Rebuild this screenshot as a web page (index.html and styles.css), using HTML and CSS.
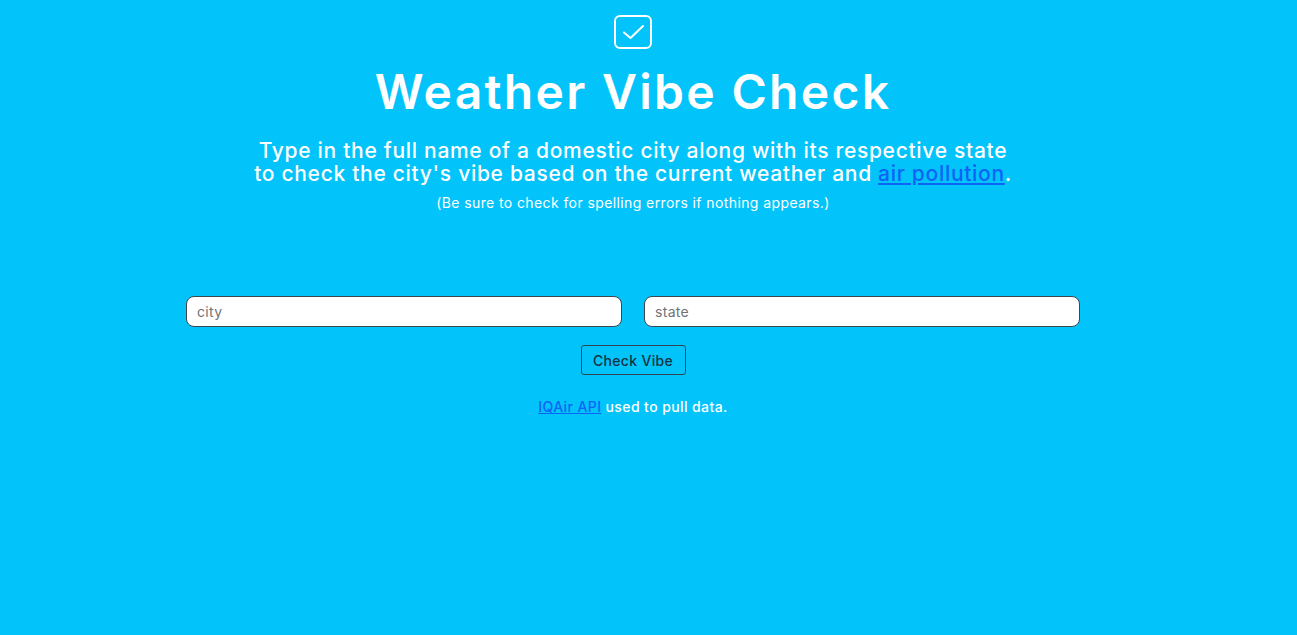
FILE: index.html
```html
<!DOCTYPE html>
<html>
<head>
<meta charset="utf-8">
<link rel="stylesheet" href="styles.css">
</head>
<body>
<main class="page">
  <svg class="logo" width="38" height="34" viewBox="0 0 38 34" fill="none" stroke="#fff" stroke-width="2" stroke-linecap="round" stroke-linejoin="round">
    <rect x="1" y="1" width="36" height="32" rx="5"/>
    <path d="M10 17.5 L16.5 23 L29 11"/>
  </svg>
  <h1 class="title">Weather Vibe Check</h1>
  <p class="lead">Type in the full name of a domestic city along with its respective state<br>to check the city's vibe based on the current weather and <a href="#">air pollution</a>.</p>
  <p class="note">(Be sure to check for spelling errors if nothing appears.)</p>
  <form class="search">
    <div class="fields">
      <input class="field" type="text" placeholder="city">
      <input class="field" type="text" placeholder="state">
    </div>
    <button class="btn" type="button">Check Vibe</button>
  </form>
  <p class="credit"><a href="#">IQAir API</a> used to pull data.</p>
</main>
</body>
</html>
```

FILE: styles.css
```css
html, body {
  margin: 0;
  padding: 0;
  background: #02c4fb;
  height: 100%;
}
body {
  font-family: Inter, "Noto Sans", sans-serif;
  color: #fff;
}
.page {
  width: 1266px;
  display: flex;
  flex-direction: column;
  align-items: center;
  padding-top: 15px;
}
.logo {
  display: block;
}
.title {
  margin: 14px 0 0;
  font-size: 48px;
  line-height: 58px;
  font-weight: 600;
  letter-spacing: 2.3px;
}
.lead {
  margin: 18px 0 0;
  font-size: 21px;
  line-height: 23px;
  font-weight: 500;
  letter-spacing: 0.7px;
  text-align: center;
}
.lead a, .credit a {
  color: #0d63f5;
  text-decoration: underline;
}
.note {
  margin: 8px 0 0;
  font-size: 14px;
  line-height: 20px;
  letter-spacing: 0.4px;
}
.search {
  margin-top: 83px;
  display: flex;
  flex-direction: column;
  align-items: center;
}
.fields {
  display: flex;
  gap: 22px;
}
.field {
  box-sizing: border-box;
  width: 436px;
  height: 31px;
  border: 1.5px solid #3a4650;
  border-radius: 8px;
  padding: 0 10px;
  font-family: inherit;
  font-size: 14px;
  letter-spacing: 0.3px;
  color: #333;
  background: #fff;
}
.field::placeholder {
  color: #6f7378;
}
.btn {
  margin-top: 18px;
  height: 30px;
  width: 105px;
  border: 1px solid #2c4450;
  border-radius: 3px;
  background: transparent;
  font-family: inherit;
  font-size: 14px;
  font-weight: 500;
  letter-spacing: 0.3px;
  color: #15323f;
}
.credit {
  margin: 22px 0 0;
  font-size: 14px;
  font-weight: 500;
  line-height: 20px;
  letter-spacing: 0.4px;
}
```
